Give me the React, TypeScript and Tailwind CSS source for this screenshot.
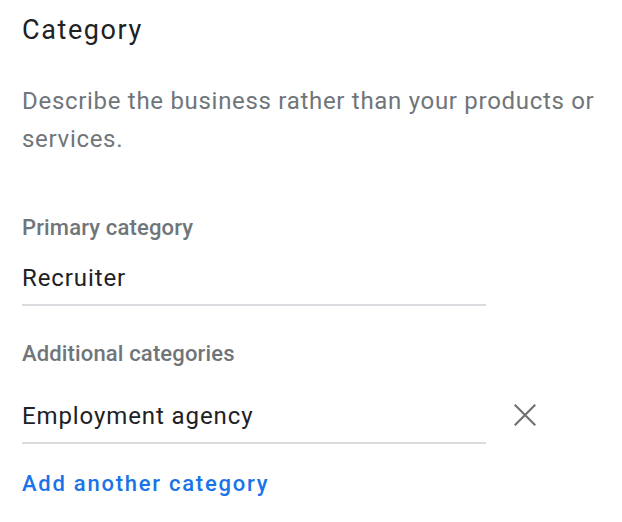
export default function App() {
  return (
    <div className="w-[622px] h-[522px] bg-white pl-[22px] pt-[13px]" style={{ fontFamily: "Roboto, 'Noto Sans', sans-serif" }}>
      <h1 className="text-[27px] leading-[34px] tracking-[1.6px] text-[#202124]">Category</h1>
      <p className="mt-[35px] w-[590px] text-[24px] leading-[38px] tracking-[0.7px] text-[#70757a]">
        Describe the business rather than your products or services.
      </p>
      <div className="mt-[56px] text-[22px] leading-[28px] font-medium tracking-[0.15px] text-[#70757a]">Primary category</div>
      <div className="mt-[20px] w-[464px] border-b-2 border-[#dadce0] pb-[10px] text-[24px] leading-[32px] tracking-[0.9px] text-[#202124]">Recruiter</div>
      <div className="mt-[34px] text-[22px] leading-[28px] font-medium tracking-[0.15px] text-[#70757a]">Additional categories</div>
      <div className="mt-[32px] flex items-start">
        <div className="w-[464px] border-b-2 border-[#dadce0] pb-[10px] text-[24px] leading-[32px] tracking-[0.9px] text-[#202124]">Employment agency</div>
        <button className="ml-[28px] mt-[4px] flex h-[22px] w-[22px] items-center justify-center">
          <svg width="22" height="22" viewBox="0 0 22 22" fill="none" stroke="#727272" strokeWidth="2.2" strokeLinecap="square">
            <path d="M1.5 1.5 L20.5 20.5 M20.5 1.5 L1.5 20.5" />
          </svg>
        </button>
      </div>
      <div className="mt-[26px] text-[22px] leading-[28px] font-medium tracking-[1.75px] text-[#1a73e8]">Add another category</div>
    </div>
  );
}
